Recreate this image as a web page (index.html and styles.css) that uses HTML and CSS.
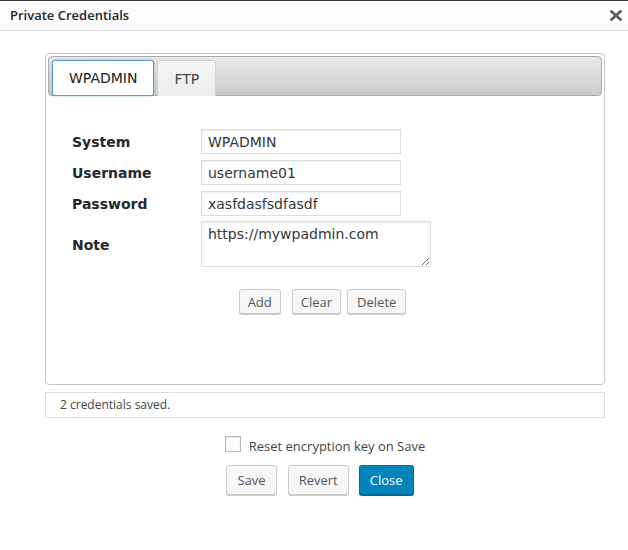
FILE: index.html
```html
<!DOCTYPE html>
<html>
<head>
<meta charset="utf-8">
<link rel="stylesheet" href="styles.css">
</head>
<body>
<div class="dialog">
  <div class="titlebar">
    <span class="title">Private Credentials</span>
    <span class="close-x"><svg width="12" height="11" viewBox="0 0 12 11"><path d="M1.5 1.5 L10.5 9.5 M10.5 1.5 L1.5 9.5" stroke="#5f5f5f" stroke-width="2.8" stroke-linecap="square"/></svg></span>
  </div>
  <div class="content">
    <div class="tabs">
      <div class="tab-nav">
        <span class="tab active">WPADMIN</span>
        <span class="tab">FTP</span>
      </div>
      <div class="panel">
        <div class="form-grid">
          <label class="lbl">System</label>
          <input class="field" type="text" value="WPADMIN">
          <label class="lbl">Username</label>
          <input class="field" type="text" value="username01">
          <label class="lbl">Password</label>
          <input class="field" type="text" value="xasfdasfsdfasdf">
          <label class="lbl">Note</label>
          <textarea class="note">https://mywpadmin.com</textarea>
        </div>
        <div class="actions">
          <button class="btn btn-add">Add</button>
          <button class="btn btn-clear">Clear</button>
          <button class="btn btn-delete">Delete</button>
        </div>
      </div>
    </div>
    <div class="status">2 credentials saved.</div>
    <label class="reset"><span class="checkbox"></span><span class="reset-text">Reset encryption key on Save</span></label>
    <div class="footer">
      <button class="btn btn-lg">Save</button>
      <button class="btn btn-lg">Revert</button>
      <button class="btn btn-lg btn-primary">Close</button>
    </div>
  </div>
</div>
</body>
</html>
```
FILE: styles.css
```css
html, body {
  margin: 0;
  padding: 0;
  background: #fff;
}
body {
  font-family: "Open Sans", "Liberation Sans", sans-serif;
  color: #32373c;
}
.dialog {
  width: 628px;
  height: 550px;
  border-top: 1px solid #3c3c3c;
  box-sizing: border-box;
}
.titlebar {
  height: 30px;
  box-sizing: border-box;
  border-bottom: 1px solid #dddddd;
  background: #fcfcfc;
  display: flex;
  align-items: center;
  justify-content: space-between;
  padding: 0 6px 1px 10px;
}
.title {
  font-size: 13px;
  font-weight: 600;
  color: #23282d;
}
.close-x {
  display: flex;
  width: 12px;
  height: 11px;
}
.content {
  margin-left: 45px;
  width: 560px;
  padding-top: 22px;
}
.tabs {
  height: 332px;
  box-sizing: border-box;
  border: 1px solid #c5c5c5;
  border-radius: 4px;
  padding: 2px;
  display: flex;
  flex-direction: column;
}
.tab-nav {
  height: 40px;
  box-sizing: border-box;
  border: 1px solid #aaaaaa;
  border-radius: 4px;
  background: linear-gradient(#e9e9e9, #cbcbcb);
  display: flex;
  align-items: flex-end;
  padding: 0 3px;
  gap: 3px;
}
.tab {
  height: 36px;
  box-sizing: border-box;
  margin-bottom: -1px;
  padding: 0 16px;
  display: flex;
  align-items: center;
  font-family: "DejaVu Sans", Verdana, sans-serif;
  font-size: 14px;
  color: #454545;
  background: linear-gradient(#f6f6f6, #ececec);
  border: 1px solid #d3d3d3;
  border-bottom: none;
  border-radius: 3px 3px 0 0;
}
.tab.active {
  background: #fff;
  color: #212121;
  border: 1px solid #5b9dd9;
  border-radius: 3px;
  box-shadow: 0 0 2px rgba(30, 140, 190, 0.6);
}
.panel {
  flex: 1;
  padding: 33px 24px 0;
}
.form-grid {
  display: grid;
  grid-template-columns: 129px auto;
  row-gap: 6px;
  align-items: center;
  justify-items: start;
}
.lbl {
  font-family: "DejaVu Sans", Verdana, sans-serif;
  font-weight: bold;
  font-size: 14px;
  color: #23282d;
}
.field, .note {
  font-family: "DejaVu Sans", Verdana, sans-serif;
  font-size: 14px;
  color: #32373c;
  border: 1px solid #dddddd;
  box-shadow: inset 0 1px 2px rgba(0, 0, 0, 0.07);
  background: #fff;
  box-sizing: border-box;
  margin: 0;
  outline: none;
}
.field {
  width: 200px;
  height: 25px;
  padding: 0 6px;
}
.note {
  width: 230px;
  height: 46px;
  padding: 3px 6px;
  margin-top: -1px;
  resize: both;
  line-height: 18px;
}
.actions {
  display: flex;
  justify-content: center;
  margin-top: 22px;
}
.btn {
  font-family: "Open Sans", "Liberation Sans", sans-serif;
  font-size: 13px;
  color: #555;
  background: #f7f7f7;
  border: 1px solid #cccccc;
  border-radius: 3px;
  box-shadow: 0 1px 0 #cccccc;
  height: 25px;
  padding: 0 8px;
  margin: 0;
  line-height: 22px;
  box-sizing: border-box;
}
.btn-add { margin-right: 11px; }
.btn-clear { margin-right: 6px; }
.btn-delete { margin-right: 5px; padding: 0 9px; }
.status {
  margin-top: 7px;
  height: 26px;
  box-sizing: border-box;
  border: 1px solid #dddddd;
  padding-left: 14px;
  font-size: 12px;
  line-height: 23px;
  color: #444;
}
.reset {
  display: flex;
  align-items: center;
  justify-content: center;
  gap: 8px;
  margin-top: 18px;
  height: 16px;
  font-size: 13px;
  color: #444;
}
.reset-text {
  padding-top: 3px;
}
.checkbox {
  width: 16px;
  height: 16px;
  box-sizing: border-box;
  border: 1px solid #b4b9be;
  background: #fff;
  box-shadow: inset 0 1px 2px rgba(0, 0, 0, 0.1);
}
.footer {
  display: flex;
  justify-content: center;
  margin-top: 13px;
}
.btn-lg {
  height: 30px;
  line-height: 27px;
  padding: 0 10px;
  margin-right: 10px;
}
.btn-lg:first-child { margin-right: 11px; }
.btn-primary {
  background: #0085ba;
  border-color: #0073aa #006799 #006799;
  box-shadow: 0 1px 0 #006799;
  color: #fff;
}
```
